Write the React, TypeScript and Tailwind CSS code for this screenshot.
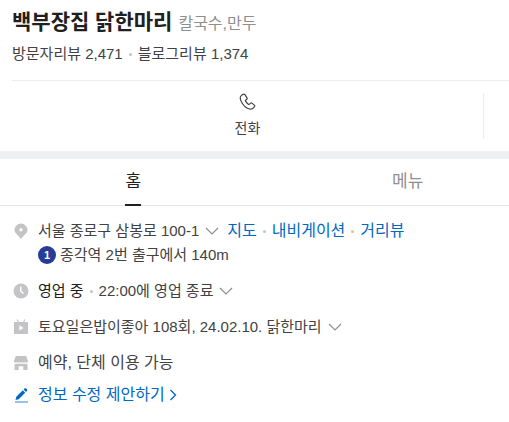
import type { ReactNode } from "react";

export default function App() {
  return (
    <div className="overflow-hidden bg-white font-['Liberation_Sans','Noto_Sans_CJK_KR',sans-serif] text-[15px] leading-6 text-[#424242]">
      <PlaceHeader />
      <ActionBar />
      <Tabs />
      <PlaceInfo />
    </div>
  );
}

function PlaceHeader() {
  return (
    <header className="px-3 pt-2 pb-3.5">
      <div className="flex items-baseline gap-1.5 whitespace-nowrap">
        <h1 className="text-[21px] leading-7 font-bold text-[#202020]">
          백부장집 닭한마리
        </h1>
        <span className="text-base text-[#8f8f8f]">칼국수,만두</span>
      </div>
      <div className="mt-1.5 flex items-center whitespace-nowrap">
        <a href="#visitor">방문자리뷰 2,471</a>
        <Dot />
        <a href="#blog">블로그리뷰 1,374</a>
      </div>
    </header>
  );
}

function ActionBar() {
  return (
    <div className="ml-3 flex border-t border-[#ececec] py-3 pr-[25px]">
      <button className="flex grow flex-col items-center border-r border-[#ececec] text-sm text-[#424242]">
        <PhoneIcon />
        <span className="mt-1.5 leading-[22px]">전화</span>
      </button>
    </div>
  );
}

function Tabs() {
  return (
    <nav className="border-t-8 border-b border-t-[#eeeff1] border-b-[#e5e5e5]">
      <div className="-ml-1 flex text-[17px]">
        <a
          href="#home"
          className="flex shrink-0 basis-[53.5%] justify-center text-[#202020]"
        >
          <span className="-mb-px border-b-2 border-[#202020] pt-[9px] pb-2 leading-7">
            홈
          </span>
        </a>
        <a
          href="#menu"
          className="flex shrink-0 basis-[53.5%] justify-center text-[#8f8f8f]"
        >
          <span className="pt-[9px] leading-7">메뉴</span>
        </a>
      </div>
    </nav>
  );
}

function PlaceInfo() {
  return (
    <main className="flex flex-col gap-3 px-3 pt-[13px] pb-4 whitespace-nowrap">
      <InfoRow icon={<PinIcon />}>
        <div className="flex items-center">
          <button className="flex items-center gap-1.5">
            서울 종로구 삼봉로 100-1
            <ChevronDown />
          </button>
          <a href="#map" className="ml-2 text-base text-[#0068c3]">
            지도
          </a>
          <Dot />
          <a href="#navigation" className="text-base text-[#0068c3]">
            내비게이션
          </a>
          <Dot />
          <a href="#street" className="text-base text-[#0068c3]">
            거리뷰
          </a>
        </div>
        <div className="flex items-center gap-1">
          <span className="flex size-[18px] items-center justify-center rounded-full bg-[#263c96] text-[11px] font-bold text-white">
            1
          </span>
          종각역 2번 출구에서 140m
        </div>
      </InfoRow>
      <InfoRow icon={<ClockIcon />}>
        <button className="flex items-center">
          <span className="text-[#202020]">영업 중</span>
          <Dot />
          <span className="mr-1.5">22:00에 영업 종료</span>
          <ChevronDown />
        </button>
      </InfoRow>
      <InfoRow icon={<TvIcon />}>
        <button className="flex items-center gap-1.5">
          토요일은밥이좋아 108회, 24.02.10. 닭한마리
          <ChevronDown />
        </button>
      </InfoRow>
      <InfoRow icon={<StoreIcon />}>
        <p className="text-base">예약, 단체 이용 가능</p>
      </InfoRow>
      <div className="-mt-1">
        <InfoRow icon={<PencilIcon />}>
          <a
            href="#edit"
            className="flex items-center gap-1 text-base text-[#0068c3]"
          >
            정보 수정 제안하기
            <ChevronRight />
          </a>
        </InfoRow>
      </div>
    </main>
  );
}

function InfoRow({ icon, children }: { icon: ReactNode; children: ReactNode }) {
  return (
    <div className="flex gap-2">
      <span className="flex h-6 w-[18px] shrink-0 items-center justify-center">
        {icon}
      </span>
      <div>{children}</div>
    </div>
  );
}

function Dot() {
  return <span className="mx-1.5 size-[3px] rounded-full bg-[#c4c4c6]" />;
}

function PhoneIcon() {
  return (
    <svg width="18" height="18" viewBox="0 0 18 18" fill="none" stroke="#424242" strokeWidth="1.2" strokeLinejoin="round">
      <path d="M3.7 1.6 2.3 2.6C0.8 3.800 1.100 6.600 2.900 9.700 4.900 13 7.800 15.400 10.500 16 12.300 16.400 13.500 16 14.400 14.900L15.500 13.600C15.900 13 15.800 12.500 15.300 12.100L12.900 10.100C12.400 9.700 11.800 9.800 11.400 10.300L10.600 11.200C10.200 11.600 9.800 11.600 9.300 11.200 8.200 10.300 7.300 9.300 6.600 8.100 6.300 7.600 6.400 7.200 6.800 6.900L7.700 6.200C8.200 5.800 8.300 5.300 8 4.800L6.100 1.900C5.600 1.200 4.600 1 3.700 1.600Z" />
    </svg>
  );
}

function PinIcon() {
  return (
    <svg width="18" height="18" viewBox="0 0 18 18" fill="#c4c4c6">
      <path fillRule="evenodd" d="M9 1.500A6.500 6.500 0 0 0 2.500 8c0 3.100 3.100 4.400 5.600 8.100.5.700 1.300.7 1.800 0C12.400 12.400 15.500 11.100 15.500 8A6.500 6.500 0 0 0 9 1.500ZM9 6.100a1.700 1.700 0 1 1 0 3.400 1.700 1.700 0 0 1 0-3.400Z" />
    </svg>
  );
}

function ClockIcon() {
  return (
    <svg width="18" height="18" viewBox="0 0 18 18" fill="none">
      <circle cx="9" cy="9" r="7.500" fill="#c4c4c6" />
      <path d="M8.800 4.500V9.200L11.500 11.500" stroke="#fff" strokeWidth="1.500" />
    </svg>
  );
}

function TvIcon() {
  return (
    <svg width="18" height="18" viewBox="0 0 18 18" fill="#c4c4c6">
      <path d="M5 1.500 6.500 4M13 1.500 11.500 4" stroke="#c4c4c6" strokeWidth="1.100" />
      <path fillRule="evenodd" d="M2 4h14v12H2ZM7.300 7.200v5.400l4.400-2.700Z" />
    </svg>
  );
}

function StoreIcon() {
  return (
    <svg width="18" height="18" viewBox="0 0 18 18" fill="#c4c4c6">
      <path d="M3.800 2h10.400L16 6.800v1.100c-.7 1.100-2.100 1.100-2.800 0-.7 1.100-2.100 1.100-2.800 0-.7 1.100-2.100 1.100-2.800 0-.7 1.100-2.100 1.100-2.800 0-.7 1.100-2.100 1.100-2.800 0V6.800Z" />
      <path d="M2.500 9.900c.8.300 1.600.1 2.300-.4.800.6 2 .6 2.800 0 .8.600 2 .6 2.800 0 .8.600 2 .6 2.800 0 .7.500 1.500.7 2.300.4V16h-4.200v-3.800H6.700V16H2.500Z" />
    </svg>
  );
}

function PencilIcon() {
  return (
    <svg width="18" height="18" viewBox="0 0 18 18" fill="#0068c3">
      <path d="M3.500 14 4.300 10.800 10.800 4.300 13.200 6.700 6.700 13.200ZM11.600 3.500 12.500 2.600C13 2.100 13.700 2.100 14.200 2.600L14.900 3.300C15.400 3.800 15.400 4.500 14.900 5L14 5.900Z" />
      <path d="M3 15.500h13v1H3Z" opacity=".8" />
    </svg>
  );
}

function ChevronDown() {
  return (
    <svg width="14" height="8" viewBox="0 0 14 8" fill="none" stroke="#8f8f8f" strokeWidth="1.200">
      <path d="M1 1 7 7 13 1" />
    </svg>
  );
}

function ChevronRight() {
  return (
    <svg width="8" height="12" viewBox="0 0 8 12" fill="none" stroke="#0068c3" strokeWidth="1.300">
      <path d="M1.500 1 6.500 6 1.500 11" />
    </svg>
  );
}
